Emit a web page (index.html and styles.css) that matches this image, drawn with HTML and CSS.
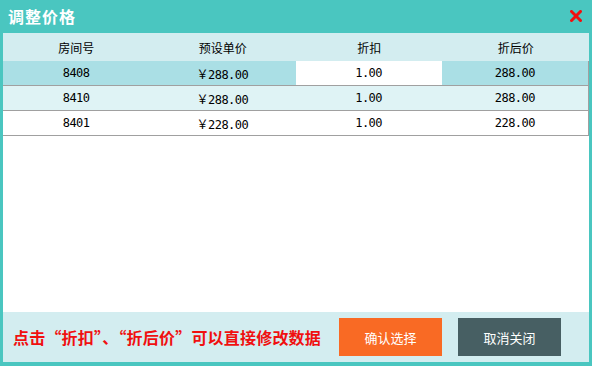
FILE: index.html
```html
<!DOCTYPE html>
<html lang="zh-CN">
<head>
<meta charset="utf-8">
<link rel="stylesheet" href="styles.css">
</head>
<body>
<div class="dialog">
  <div class="titlebar">
    <span class="title">调整价格</span>
    <svg class="close" width="12" height="12" viewBox="0 0 12 12"><path d="M1.5 1.5 L10.5 10.5 M10.5 1.5 L1.5 10.5" stroke="#f01010" stroke-width="3" stroke-linecap="square"/></svg>
  </div>
  <div class="content">
    <div class="grid head">
      <div>房间号</div><div>预设单价</div><div>折扣</div><div>折后价</div>
    </div>
    <div class="grid row sel">
      <div>8408</div><div>￥288.00</div><div class="edit">1.00</div><div>288.00</div>
    </div>
    <div class="grid row alt">
      <div>8410</div><div>￥288.00</div><div>1.00</div><div>288.00</div>
    </div>
    <div class="grid row">
      <div>8401</div><div>￥228.00</div><div>1.00</div><div>228.00</div>
    </div>
    <div class="spacer"></div>
    <div class="footer">
      <span class="hint">点击“折扣”、“折后价”可以直接修改数据</span>
      <button class="btn ok">确认选择</button>
      <button class="btn cancel">取消关闭</button>
    </div>
  </div>
</div>
</body>
</html>
```
FILE: styles.css
```css
* { box-sizing: border-box; }
html, body { margin: 0; padding: 0; }
body {
  width: 592px;
  height: 366px;
  font-family: "Noto Sans CJK SC", "DejaVu Sans", sans-serif;
  color: #000;
}
.dialog {
  width: 592px;
  height: 366px;
  background: #4ac6c0;
  padding: 0 3px 4px 3px;
  display: flex;
  flex-direction: column;
}
.titlebar {
  height: 33px;
  display: flex;
  align-items: center;
  justify-content: space-between;
  padding: 0 7px 0 5px;
}
.title {
  color: #fff;
  font-weight: bold;
  font-size: 16px;
  letter-spacing: 1px;
  line-height: 1;
  margin-top: -2px;
}
.close { margin-top: -2px; }
.content {
  flex: 1;
  background: #fff;
  display: flex;
  flex-direction: column;
}
.grid {
  display: grid;
  grid-template-columns: repeat(4, 1fr);
  font-size: 12px;
}
.grid > div {
  display: flex;
  align-items: center;
  justify-content: center;
}
.head {
  height: 28px;
  background: #d3edf0;
}
.row {
  height: 25px;
  border-bottom: 1px solid #a0a0a0;
  border-right: 1px solid #a0a0a0;
  font-family: "DejaVu Sans Mono", "Noto Sans CJK SC", monospace;
  font-size: 12px;
  letter-spacing: -0.5px;
}
.sel { background: #aadfe5; }
.sel .edit { background: #fff; }
.alt { background: #dff3f5; }
.spacer { flex: 1; }
.footer {
  height: 50px;
  background: #d3edf0;
  display: flex;
  align-items: center;
  padding: 0 28px 0 10px;
}
.hint {
  color: #f01010;
  font-weight: bold;
  font-size: 16px;
  letter-spacing: 0.2px;
  flex: 1;
  white-space: nowrap;
}
.btn {
  width: 103px;
  height: 38px;
  border: 0;
  color: #fff;
  font-family: "Noto Sans CJK SC", sans-serif;
  font-size: 13px;
  padding: 0;
}
.ok { background: #f96a24; }
.cancel { background: #475f63; margin-left: 16px; }
```
